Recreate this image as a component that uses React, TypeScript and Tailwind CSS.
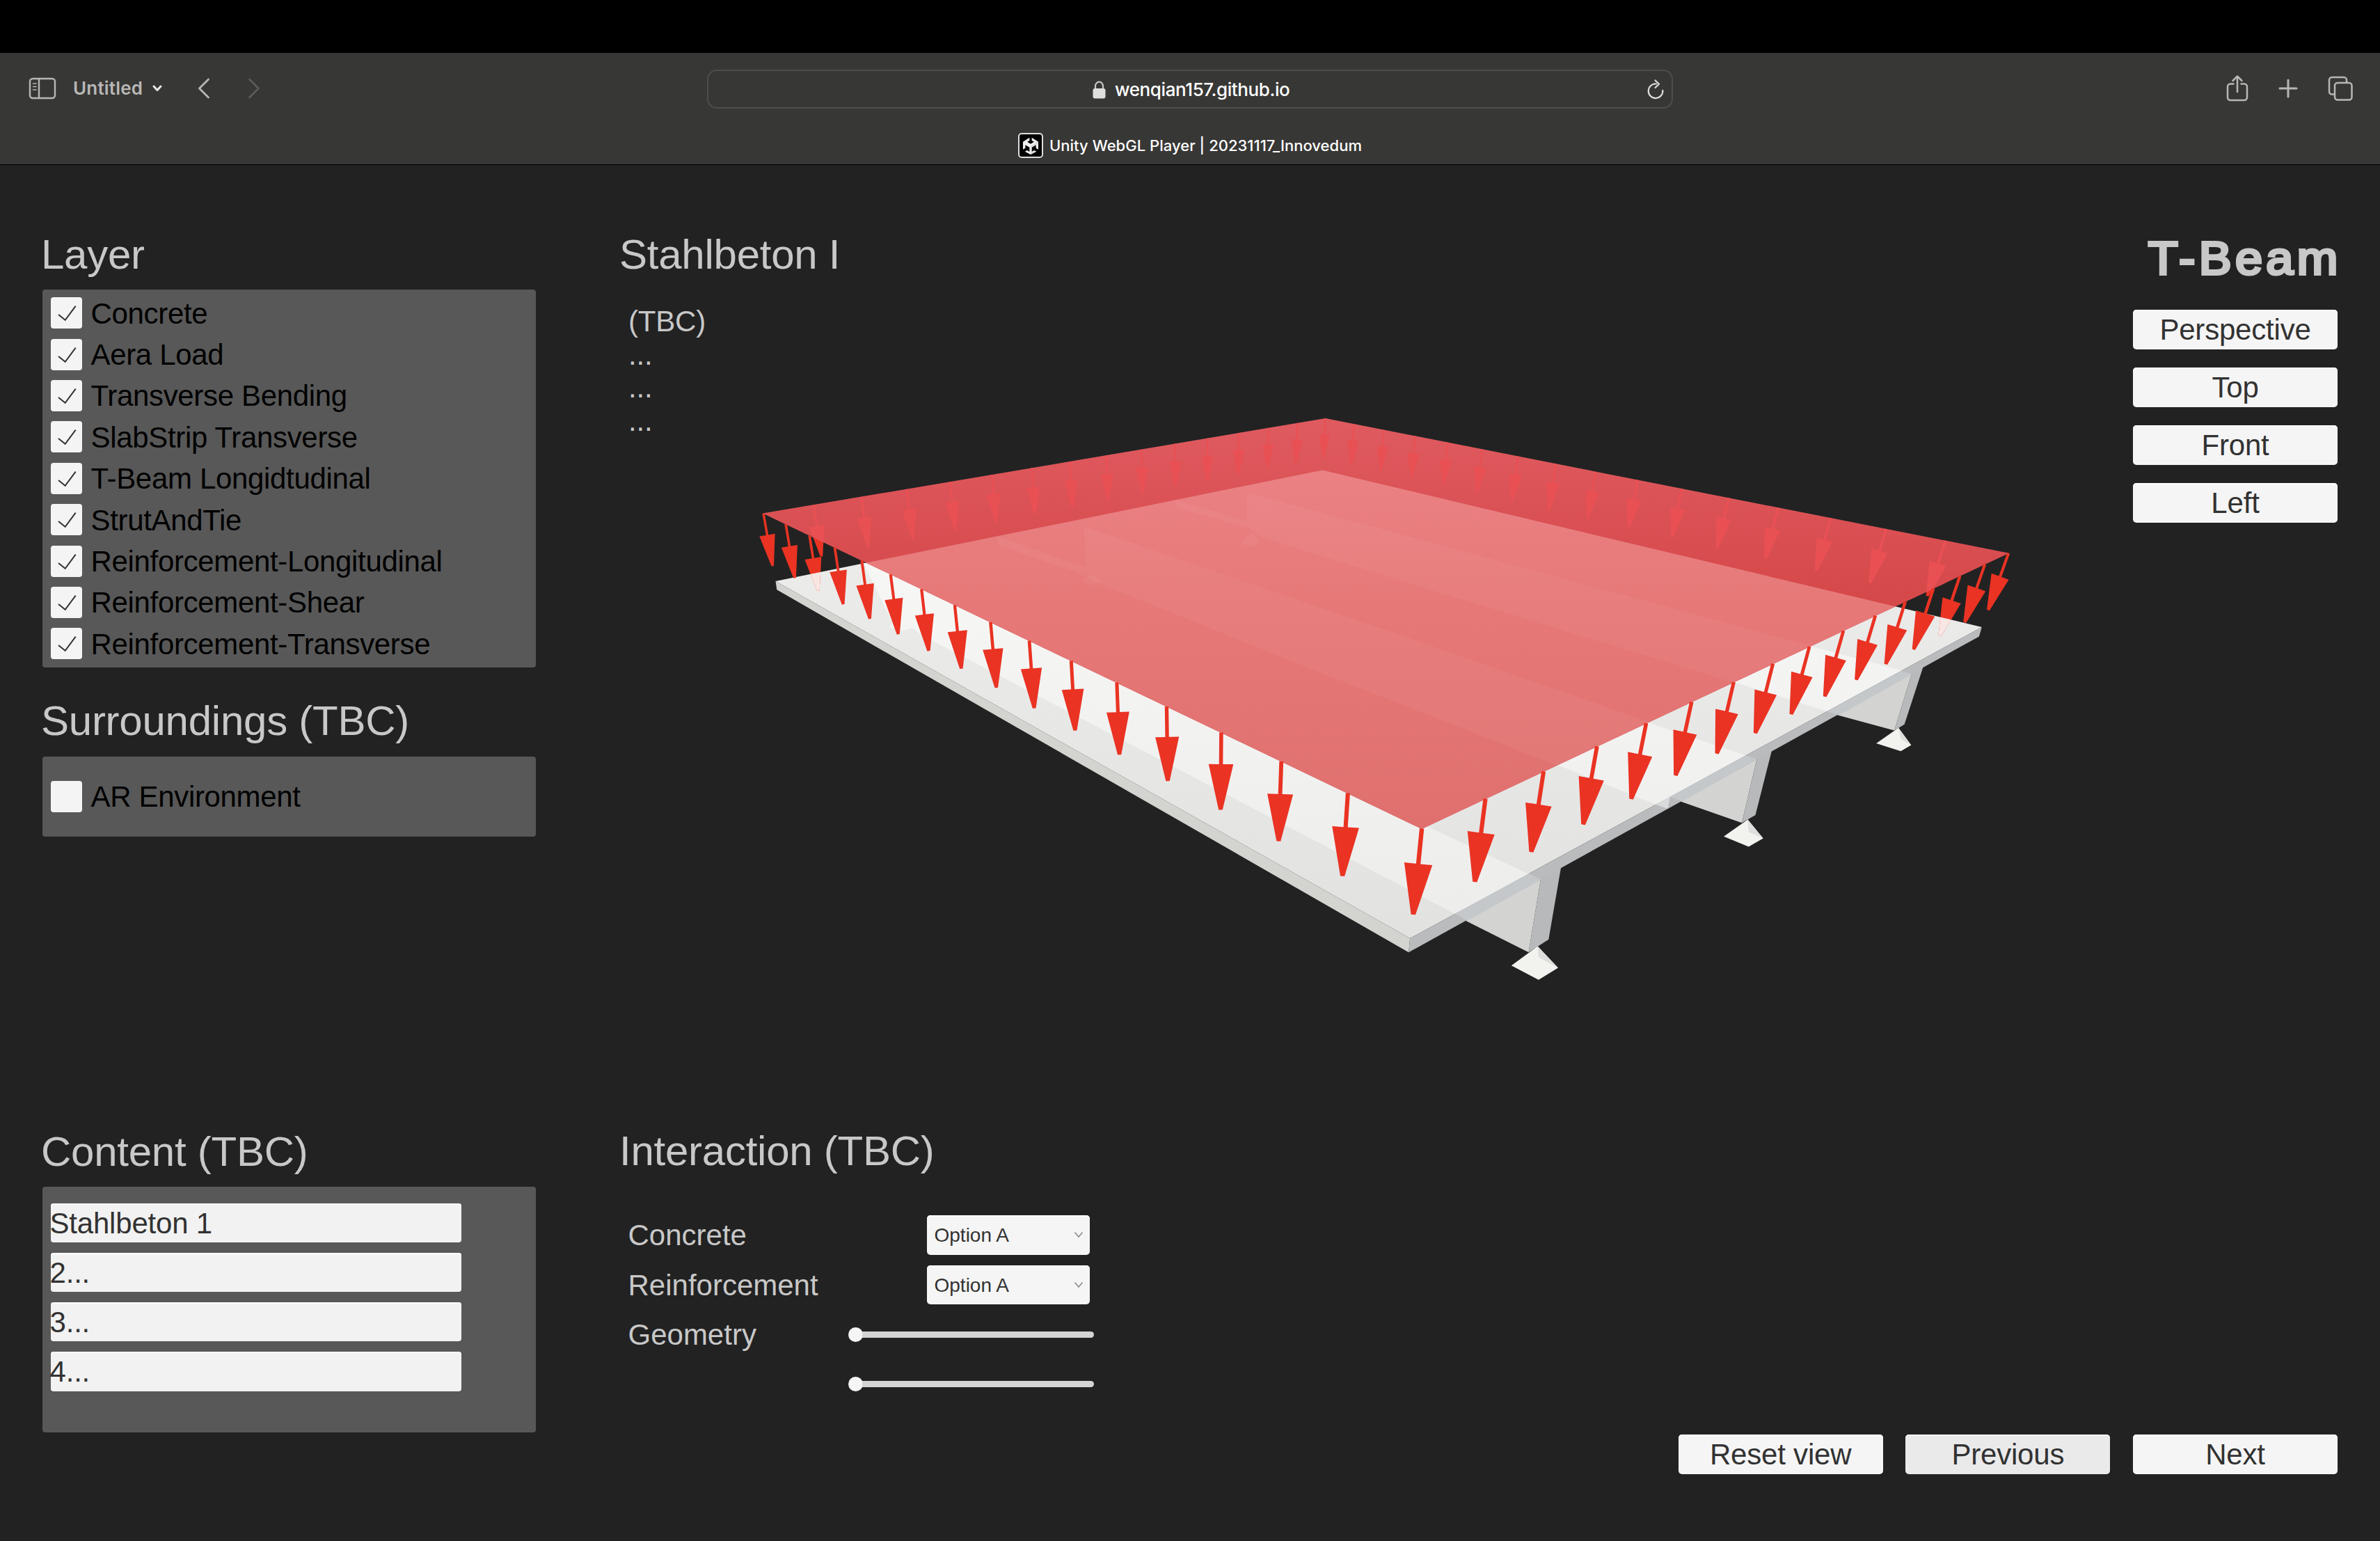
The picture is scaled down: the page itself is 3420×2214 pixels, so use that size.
import React from "react";

type Pt = [number, number];

/* ---------- geometry of the load surface ---------- */

// Projective map of the unit square onto a quad: a=(0,0) b=(1,0) c=(1,1) d=(0,1)
function quadMap(a: Pt, b: Pt, c: Pt, d: Pt) {
  const dx1 = b[0] - c[0];
  const dx2 = d[0] - c[0];
  const sx = a[0] - b[0] + c[0] - d[0];
  const dy1 = b[1] - c[1];
  const dy2 = d[1] - c[1];
  const sy = a[1] - b[1] + c[1] - d[1];
  const det = dx1 * dy2 - dx2 * dy1;
  const g = (sx * dy2 - dx2 * sy) / det;
  const h = (dx1 * sy - sx * dy1) / det;
  return (u: number, v: number): Pt => {
    const w = g * u + h * v + 1;
    return [
      ((b[0] - a[0] + g * b[0]) * u + (d[0] - a[0] + h * d[0]) * v + a[0]) / w,
      ((b[1] - a[1] + g * b[1]) * u + (d[1] - a[1] + h * d[1]) * v + a[1]) / w,
    ];
  };
}

const loadTop = quadMap([1097, 737.7], [2043.1, 1190.4], [2886.2, 794.7], [1904.6, 601]);
const loadTip = quadMap([1110.3, 813.2], [2030.8, 1314], [2856.9, 876.5], [1901.6, 658]);

const PLANE = "1096,737.5 1904.6,601 2887,794.7 2043.1,1191";
const SLAB = "1114.5,835.1 1900.3,675.4 2847.8,900.9 2026.2,1348.1";

function arrowPath(u: number, v: number) {
  const [x0, y0] = loadTop(u, v);
  const [x1, y1] = loadTip(u, v);
  const dx = x1 - x0;
  const dy = y1 - y0;
  const len = Math.hypot(dx, dy);
  const nx = dy / len;
  const ny = -dx / len;
  const head = (0.376 * len - 6.2) / 2;
  const stem = Math.max(1.3, (0.062 * len - 1.3) / 2);
  const bx = x0 + dx * 0.41;
  const by = y0 + dy * 0.41;
  const p = (x: number, y: number, k: number) => `${(x + nx * k).toFixed(1)},${(y + ny * k).toFixed(1)}`;
  return `M${p(x0, y0, -stem)}L${p(bx, by, -stem)}L${p(bx, by, -head)}L${p(x1, y1, -stem)}L${p(x1, y1, stem)}L${p(bx, by, head)}L${p(bx, by, stem)}L${p(x0, y0, stem)}Z`;
}

const U = 16;
const V = 15;
const backArrows: string[] = [];
for (let j = 1; j <= V; j++) backArrows.push(arrowPath(0, j / V));
for (let i = 1; i < U; i++) backArrows.push(arrowPath(i / U, 1));
const frontArrows: string[] = [];
for (let i = 0; i <= U; i++) frontArrows.push(arrowPath(i / U, 0));
for (let j = 1; j <= V; j++) frontArrows.push(arrowPath(1, j / V));
const sunkArrows = [arrowPath(2 / U, 0), arrowPath(1, (V - 2) / V)];

function Scene() {
  return (
    <svg className="pointer-events-none absolute inset-0" width="3420" height="1977" viewBox="0 237 3420 1977">
      <defs>
        <clipPath id="plane"><polygon points={PLANE} /></clipPath>
        <clipPath id="slab"><polygon points={SLAB} /></clipPath>
        <linearGradient id="band" gradientUnits="userSpaceOnUse" x1="0" y1="601" x2="0" y2="850">
          <stop offset="0" stopColor="#df5b60" />
          <stop offset="1" stopColor="#d6494b" />
        </linearGradient>
        <linearGradient id="pink" gradientUnits="userSpaceOnUse" x1="0" y1="675" x2="0" y2="1190">
          <stop offset="0" stopColor="#eb8184" />
          <stop offset="0.4" stopColor="#e67877" />
          <stop offset="1" stopColor="#df706e" />
        </linearGradient>
        <linearGradient id="slabTop" gradientUnits="userSpaceOnUse" x1="0" y1="830" x2="0" y2="1340">
          <stop offset="0" stopColor="#ebebea" />
          <stop offset="1" stopColor="#e2e2e1" />
        </linearGradient>
        <linearGradient id="rib" gradientUnits="userSpaceOnUse" x1="0" y1="830" x2="0" y2="1310">
          <stop offset="0" stopColor="#f6f7f5" />
          <stop offset="1" stopColor="#ededec" />
        </linearGradient>
      </defs>

      {/* girders */}
      <g fill="#d3d3d1">
        <polygon points="2106,1322.7 2214.2,1262 2196.6,1368.2" />
        <polygon points="2415,1151.4 2525.1,1088 2503,1182.3" />
        <polygon points="2640,1027.2 2747.6,966 2722.2,1049.5" />
      </g>
      <g fill="#b7b9bb">
        <polygon points="2214.2,1262 2243.5,1244 2225.3,1349.8 2196.6,1368.2" />
        <polygon points="2525.1,1088 2546.6,1076 2522.5,1170.9 2503,1182.3" />
        <polygon points="2747.6,966 2763.9,957 2736.6,1040.8 2722.2,1049.5" />
      </g>

      {/* supports */}
      <g fill="#f2f2ef">
        <polygon points="2209.6,1359.5 2171.9,1387.2 2210.9,1407.8 2238.9,1390.4" />
        <polygon points="2511.5,1177.4 2477,1201.8 2512.8,1216.4 2533.6,1204.5" />
        <polygon points="2728.1,1045.7 2696.2,1067.9 2731.4,1079.3 2746.3,1070.6" />
      </g>
      <g fill="#dededc">
        <polygon points="2209.6,1359.5 2238.9,1390.4 2210.9,1375.2" />
        <polygon points="2511.5,1177.4 2533.6,1204.5 2512.8,1195.3" />
        <polygon points="2728.1,1045.7 2746.3,1070.6 2731.4,1061.4" />
      </g>

      {/* slab */}
      <polygon fill="url(#slabTop)" points={SLAB} />
      <g fill="url(#rib)">
        <polygon points="1240,808 1275,823 2197.3,1256 2090.6,1312.9 1335,918 1311,903 1297,906 1277,901 1283,895" />
        <polygon points="1558,756.5 2010,911.6 2368.4,1038 2508.2,1085.2 2380,1156.2 2241.5,1100.4 1900,967.6 1584,840.2" />
        <polygon points="1791.9,707.6 2605.8,929.6 2732.6,963.3 2625.3,1021.8 2492,980 1900,799.5 1811.3,771.3" />
      </g>
      <polygon fill="#d3d3d0" points="1114.5,835.1 2026.2,1348.1 2024.2,1368.2 1116.3,847.3" />
      <polygon fill="#b9bbbd" points="2026.2,1348.1 2847.8,900.9 2843.9,914.5 2024.2,1368.2" />
      <g fill="#c4c8ca">
        <polygon points="2090.6,1312.9 2197.3,1255 2214.2,1264.1 2108.2,1322.7" />
        <polygon points="2399.6,1144.8 2508.2,1085.7 2525.1,1090.1 2417.2,1151.4" />
        <polygon points="2625.3,1022.3 2732.6,963.7 2747.6,968.7 2642.9,1027.2" />
      </g>
      <polygon fill="#d8dadb" points="2380,1156.2 2399.6,1144.8 2396.5,1162" />

      {/* load plane */}
      <g fill="#ea3323">{backArrows.map((d, i) => <path key={i} d={d} />)}</g>
      <polygon fill="url(#band)" points={PLANE} />
      <g clipPath="url(#plane)">
        <g fill="#e95054">{backArrows.map((d, i) => <path key={i} d={d} />)}</g>
        <polygon fill="url(#pink)" points={SLAB} />
        <g fill="#ffffff" fillOpacity="0.045">
          <polygon points="1558,756.5 2010,911.6 2508.2,1085.2 2380,1156.2 1900,967.6 1584,840.2 1560,830" />
          <polygon points="1791.9,707.6 2732.6,963.3 2625.3,1021.8 1900,799.5 1811.3,771.3 1791.9,756" />
          <polygon points="1690,718.8 1791.9,748.4 1791.9,757.6 1690,729" />
          <polygon points="1433.8,771.3 1559.8,814.7 1559.8,827.4 1433.8,783" />
          <polygon points="1797.9,764.7 1813,779 1799,785.6 1782.8,780.5" />
          <polygon points="1569,825 1584,835 1570.7,841 1554.4,835" />
        </g>
      </g>

      <g fill="#ea3323">{frontArrows.map((d, i) => <path key={i} d={d} />)}</g>
      <g clipPath="url(#slab)" fill="#f8e6e3">{sunkArrows.map((d, i) => <path key={i} d={d} />)}</g>
    </svg>
  );
}

/* ---------- browser chrome ---------- */

function Toolbar() {
  return (
    <header className="h-[237px] shrink-0 border-b border-black bg-[#373735] font-[Inter,sans-serif]">
      <div className="h-[76px] bg-black" />
      <div className="flex h-[104px] items-center text-[#b7b7b5]">
        <div className="flex w-[1016px] items-center pb-[2px] pl-[41px]">
          <svg width="40" height="32" viewBox="0 0 40 32" fill="none" stroke="currentColor">
            <rect x="2" y="2" width="36" height="28" rx="4" strokeWidth="2.4" />
            <path d="M15 2v28" strokeWidth="2.4" />
            <path d="M6.500 9h4.500M6.500 13.500h4.500M6.500 18h4.500" strokeWidth="1.600" strokeLinecap="round" />
          </svg>
          <span className="ml-[24px] text-[26px] font-semibold leading-8 tracking-[0.2px]">Untitled</span>
          <svg className="ml-[13px]" width="16" height="12" viewBox="0 0 16 12" fill="none" stroke="#e8e8e6" strokeWidth="3" strokeLinecap="round" strokeLinejoin="round">
            <path d="M3 3l5 5.500L13 3" />
          </svg>
          <svg className="ml-[49px]" width="20" height="32" viewBox="0 0 20 32" fill="none" stroke="currentColor" strokeWidth="2.800" strokeLinecap="round" strokeLinejoin="round">
            <path d="M16.500 3L3.500 16l13 13" />
          </svg>
          <svg className="ml-[52px]" width="20" height="32" viewBox="0 0 20 32" fill="none" stroke="#5b5b59" strokeWidth="2.800" strokeLinecap="round" strokeLinejoin="round">
            <path d="M3.500 3l13 13-13 13" />
          </svg>
        </div>
        <div className="flex h-[56px] w-[1388px] items-center rounded-[14px] border-2 border-[#4d4d4b]">
          <div className="flex flex-1 items-center pl-[552px] pt-[2px]">
            <svg width="19" height="26" viewBox="0 0 19 26">
              <path d="M4 13V7.500a5.500 5.800 0 0 1 11 0V13" fill="none" stroke="#c8c8c6" strokeWidth="2.200" />
              <rect x="0.500" y="11" width="18" height="14.500" rx="3" fill="#dfdfdd" />
            </svg>
            <span className="ml-[13px] text-[26px] font-medium leading-8 tracking-[-0.4px] text-white">wenqian157.github.io</span>
          </div>
          <svg className="mr-[9px]" width="28" height="32" viewBox="0 0 28 32" fill="none" stroke="#dcdcda" strokeWidth="2.200" strokeLinecap="round" strokeLinejoin="round">
            <path d="M15 8.500a10.300 10.300 0 1 0 9.300 9.300" />
            <path d="M13.500 3.500l5.500 5.200-5.500 5.300" />
          </svg>
        </div>
        <div className="flex flex-1 items-center justify-end pb-[3px] pr-[38px]">
          <svg width="34" height="40" viewBox="0 0 34 40" fill="none" stroke="currentColor" strokeWidth="2.500" strokeLinecap="round" strokeLinejoin="round">
            <path strokeLinecap="butt" d="M12.500 13.500H7a4 4 0 0 0-4 4V33a4 4 0 0 0 4 4h20a4 4 0 0 0 4-4V17.500a4 4 0 0 0-4-4h-5.500" />
            <path d="M17 25V3M10.500 9L17 2.500 23.500 9" />
          </svg>
          <svg className="ml-[41px]" width="30" height="30" viewBox="0 0 30 30" stroke="currentColor" strokeWidth="3" strokeLinecap="round">
            <path d="M15 3v24M3 15h24" />
          </svg>
          <svg className="ml-[41px]" width="38" height="38" viewBox="0 0 38 38" fill="none" stroke="currentColor" strokeWidth="2.500">
            <path d="M10.500 27.500H7a4 4 0 0 1-4-4V7a4 4 0 0 1 4-4h17a4 4 0 0 1 4 4v3.500" />
            <rect x="11" y="11" width="24.500" height="24.500" rx="4" />
          </svg>
        </div>
      </div>
      <div className="flex h-[56px] items-center justify-center pt-[2px]">
        <span className="flex h-9 w-9 items-center justify-center rounded-[5px] border-2 border-[#dededc] bg-black">
          <svg width="22" height="25" viewBox="0 0 66 75">
            <path
              fill="#f0f0f0"
              d="M0 20L28 2V15L18 20.500L33 29L48 20.500L38 15V2L66 20V53L56 47V34L38 44V63L48 57L58 62L33 75L8 62L18 57L28 63V44L10 34V47L0 53Z"
            />
            <path fill="#d2d2d2" d="M38 44L66 27V20L33 38V75L58 62L48 57L38 63Z" opacity="0.7" />
          </svg>
        </span>
        <span className="ml-[9px] text-[22px] font-medium leading-7 tracking-[0.03px] text-white">Unity WebGL Player | 20231117_Innovedum</span>
      </div>
    </header>
  );
}

/* ---------- application ---------- */

function Heading({ children }: { children: React.ReactNode }) {
  return (
    <h2 className="-ml-[2px] whitespace-nowrap pt-px text-[60px] leading-[69px] tracking-[-0.25px] text-[#c8c8c8]">
      {children}
    </h2>
  );
}

function Check({ label, on }: { label: string; on?: boolean }) {
  return (
    <div className="flex h-[59.4px] items-center pl-[11.500px]">
      <span className="h-[45px] w-[45px] shrink-0 rounded-[4px] bg-[#f4f4f4]">
        {on && (
          <svg width="45" height="45" viewBox="0 0 45 45" fill="none" stroke="#333" strokeWidth="2">
            <path d="M11 25l9.700 7.800L35.700 12.700" />
          </svg>
        )}
      </span>
      <span className="ml-[13px] whitespace-nowrap pt-px text-[42px] leading-[47px] tracking-[-0.33px] text-black">{label}</span>
    </div>
  );
}

function PushButton({ label, dim }: { label: string; dim?: boolean }) {
  return (
    <button
      className={
        dim
          ? "h-[56.500px] w-[294px] rounded-[5px] bg-[#eaeaea] pt-px text-[42px] leading-[56px] tracking-[-0.2px] text-[#323232] shadow-[inset_0_2px_0_#f6f6f6]"
          : "h-[56.500px] w-[294px] rounded-[5px] bg-[#f5f5f5] pt-px text-[42px] leading-[56px] tracking-[-0.2px] text-[#323232] shadow-[inset_0_2px_0_#ffffff]"
      }
    >
      {label}
    </button>
  );
}

function Dropdown() {
  return (
    <div className="mr-[6px] flex h-[56.500px] w-[234.500px] items-center justify-between rounded-[5px] bg-[#f5f5f5] pl-[11px] pr-[9px] text-[#323232] shadow-[inset_0_2px_0_#ffffff]">
      <span className="pt-[2px] text-[28px] leading-8">Option A</span>
      <svg width="14" height="10" viewBox="0 0 14 10" fill="none" stroke="#8a8a8a" strokeWidth="1.600">
        <path d="M1.500 1.500L7 8l5.500-6.500" />
      </svg>
    </div>
  );
}

function Slider() {
  return (
    <div className="flex w-[353.500px] items-center">
      <span className="h-[21px] w-[21px] rounded-full bg-[#f5f5f5]" />
      <span className="-ml-px h-[9px] flex-1 rounded-r-[5px] bg-[#d4d4d4]" />
    </div>
  );
}

const layers = [
  "Concrete",
  "Aera Load",
  "Transverse Bending",
  "SlabStrip Transverse",
  "T-Beam Longidtudinal",
  "StrutAndTie",
  "Reinforcement-Longitudinal",
  "Reinforcement-Shear",
  "Reinforcement-Transverse",
];

const controls: [string, React.ReactNode][] = [
  ["Concrete", <Dropdown />],
  ["Reinforcement", <Dropdown />],
  ["Geometry", <Slider />],
  ["", <Slider />],
];

export default function App() {
  return (
    <div className="flex h-[2214px] w-[3420px] flex-col overflow-hidden bg-[#222222] font-['Liberation_Sans',Arial,sans-serif]">
      <Toolbar />
      <main className="relative flex flex-1 pl-[61px] pr-[61px] pt-[93px]">
        <Scene />
        <aside className="relative flex w-[709px] flex-col pb-[156px]">
          <Heading>Layer</Heading>
          <div className="mt-4 h-[542.500px] rounded-[4px] bg-[#585858] pt-[4px]">
            {layers.map((l) => <Check key={l} label={l} on />)}
          </div>
          <div className="mt-[41.500px]"><Heading>Surroundings (TBC)</Heading></div>
          <div className="mt-[17px] flex h-[115px] flex-col justify-center rounded-[4px] bg-[#585858]">
            <Check label="AR Environment" />
          </div>
          <div className="mt-auto"><Heading>Content (TBC)</Heading></div>
          <div className="mt-[16.500px] flex h-[353px] flex-col gap-[14.800px] rounded-[4px] bg-[#585858] pl-[11.500px] pt-[23.700px]">
            {["Stahlbeton 1", "2...", "3...", "4..."].map((t) => (
              <div key={t} className="h-[56.400px] w-[590.500px] shrink-0 rounded-[4px] bg-[#f2f2f2] shadow-[inset_0_2px_0_#ffffff]">
                <span className="-ml-px block text-[42px] leading-[57px] tracking-[-0.2px] text-[#323232]">{t}</span>
              </div>
            ))}
          </div>
        </aside>

        <section className="relative ml-[122px] flex w-[680px] flex-col pb-[190px]">
          <Heading>Stahlbeton I</Heading>
          <p className="mt-[38px] whitespace-pre-line pl-[11px] text-[42px] leading-[47.600px] tracking-[-0.2px] text-[#c8c8c8]">
            {"(TBC)\n...\n...\n..."}
          </p>
          <div className="mt-auto"><Heading>Interaction (TBC)</Heading></div>
          <div className="mt-[50.500px] pl-[10.500px]">
            {controls.map(([label, control], i) => (
              <div key={i} className="flex h-[71.300px] items-center justify-between text-[42px] leading-[47px] text-[#c8c8c8]">
                <span className="pt-px">{label}</span>
                {control}
              </div>
            ))}
          </div>
        </section>

        <section className="relative flex flex-1 flex-col items-end pb-[96.500px]">
          <h1 className="-mr-[6px] mt-px origin-right scale-x-[1.05] text-[67px] leading-[80px] tracking-[5px] text-[#c8c8c8] [-webkit-text-stroke:4px_#c8c8c8]">T-Beam</h1>
          <div className="mt-[34px] flex flex-col gap-[26.600px]">
            {["Perspective", "Top", "Front", "Left"].map((t) => <PushButton key={t} label={t} />)}
          </div>
          <div className="mt-auto flex gap-[32.700px]">
            <PushButton label="Reset view" />
            <PushButton label="Previous" dim />
            <PushButton label="Next" />
          </div>
        </section>
      </main>
    </div>
  );
}
